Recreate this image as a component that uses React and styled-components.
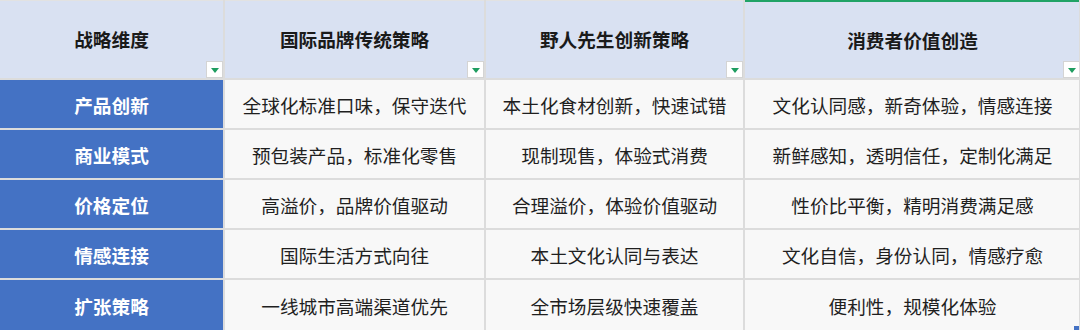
import React from "react";
import styled, { createGlobalStyle } from "styled-components";

const Global = createGlobalStyle`
  html, body { margin: 0; padding: 0; background: #ffffff; }
  body { font-family: "Noto Sans CJK SC", "Noto Sans", sans-serif; }
`;

const Sheet = styled.div`
  position: relative;
  width: 1080px;
  height: 330px;
  overflow: hidden;
  display: grid;
  grid-template-columns: 223px 259px 257px 335px;
  grid-template-rows: 78px repeat(4, 48px) 50px;
  column-gap: 2px;
  row-gap: 2px;
  background: #dcdcdc;
  box-sizing: border-box;
  border-right: 1px solid #dcdcdc;
`;

const HeadCell = styled.div`
  position: relative;
  box-sizing: border-box;
  background: #d9e1f2;
  border-top: ${(p) => (p.$active ? "2px solid #21a366" : "1px solid #e2e2e2")};
  display: flex;
  align-items: center;
  justify-content: center;
  font-size: 18.67px;
  font-weight: 700;
  color: #1a1a1a;
  padding-bottom: 2px;
`;

const FilterBtn = styled.span`
  position: absolute;
  right: 0;
  bottom: 0;
  width: 17px;
  height: 17px;
  box-sizing: border-box;
  background: #ffffff;
  border: 1px solid #d4d4d4;
  display: flex;
  align-items: center;
  justify-content: center;
  &::after {
    content: "";
    width: 0;
    height: 0;
    border-left: 4px solid transparent;
    border-right: 4px solid transparent;
    border-top: 5px solid #1f9d60;
    margin-top: 1px;
  }
`;

const LabelCell = styled.div`
  background: #4472c4;
  color: #ffffff;
  font-weight: 700;
  font-size: 18.67px;
  display: flex;
  align-items: center;
  justify-content: center;
`;

const DataCell = styled.div`
  background: #f8f8f8;
  color: #1f1f1f;
  font-size: 18.67px;
  display: flex;
  align-items: center;
  justify-content: center;
  white-space: nowrap;
`;

const Handle = styled.span`
  position: absolute;
  right: 0;
  bottom: 0;
  width: 5px;
  height: 4px;
  background: #4472c4;
`;

const headers = ["战略维度", "国际品牌传统策略", "野人先生创新策略", "消费者价值创造"];

const rows = [
  ["产品创新", "全球化标准口味，保守迭代", "本土化食材创新，快速试错", "文化认同感，新奇体验，情感连接"],
  ["商业模式", "预包装产品，标准化零售", "现制现售，体验式消费", "新鲜感知，透明信任，定制化满足"],
  ["价格定位", "高溢价，品牌价值驱动", "合理溢价，体验价值驱动", "性价比平衡，精明消费满足感"],
  ["情感连接", "国际生活方式向往", "本土文化认同与表达", "文化自信，身份认同，情感疗愈"],
  ["扩张策略", "一线城市高端渠道优先", "全市场层级快速覆盖", "便利性，规模化体验"],
];

export default function App() {
  return (
    <>
      <Global />
      <Sheet>
        {headers.map((h, i) => (
          <HeadCell key={h} $active={i === 3}>
            {h}
            <FilterBtn />
          </HeadCell>
        ))}
        {rows.map((r) =>
          r.map((c, j) =>
            j === 0 ? (
              <LabelCell key={c}>{c}</LabelCell>
            ) : (
              <DataCell key={c}>{c}</DataCell>
            )
          )
        )}
        <Handle />
      </Sheet>
    </>
  );
}
